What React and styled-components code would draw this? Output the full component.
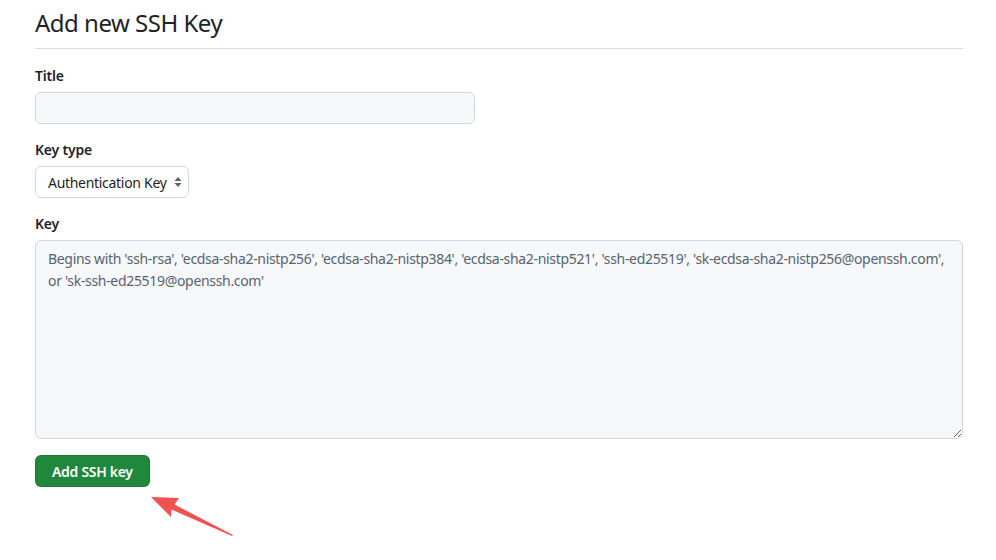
import * as React from 'react'
import styled, { createGlobalStyle } from 'styled-components'

const Global = createGlobalStyle`
  body {
    margin: 0;
    background: #ffffff;
    font-family: "Noto Sans", "Open Sans", sans-serif;
    color: #1f2328;
  }
`

const Page = styled.div`
  position: relative;
  padding: 5px 33px 0 35px;
  height: 555px;
`

const Heading = styled.h2`
  margin: 0;
  padding-bottom: 7px;
  font-size: 24px;
  font-weight: 400;
  line-height: 36px;
  letter-spacing: -0.5px;
  border-bottom: 1px solid #d8dee4;
`

const Form = styled.form`
  display: flex;
  flex-direction: column;
  gap: 16px;
  padding-top: 17px;
`

const Group = styled.div`
  display: flex;
  flex-direction: column;
  align-items: flex-start;
  gap: 6px;
`

const Label = styled.label`
  font-size: 14px;
  font-weight: 600;
  line-height: 20px;
  letter-spacing: -0.2px;
`

const Input = styled.input`
  box-sizing: border-box;
  width: 440px;
  height: 32px;
  border: 1px solid #d1d9e0;
  border-radius: 6px;
  background: #f6f8fa;
  font: inherit;
  font-size: 14px;
  padding: 0 12px;
  outline: none;
`

const SelectBox = styled.div`
  box-sizing: border-box;
  display: flex;
  align-items: center;
  gap: 7px;
  height: 32px;
  padding: 0 6px 0 12px;
  border: 1px solid #d1d9e0;
  border-radius: 6px;
  background: #ffffff;
  font-size: 14px;
  letter-spacing: -0.3px;
  color: #1f2328;
`

const TextArea = styled.textarea`
  box-sizing: border-box;
  width: 100%;
  height: 199px;
  border: 1px solid #d1d9e0;
  border-radius: 6px;
  background: #f6f8fa;
  font: inherit;
  font-size: 14px;
  line-height: 22px;
  letter-spacing: -0.32px;
  padding: 7px 12px;
  outline: none;
  resize: vertical;
  &::placeholder {
    color: #59636e;
  }
`

const Button = styled.button`
  align-self: flex-start;
  box-sizing: border-box;
  height: 32px;
  padding: 0 16px;
  border: 1px solid rgba(31, 35, 40, 0.15);
  border-radius: 6px;
  background: #1f883d;
  color: #ffffff;
  font: inherit;
  font-size: 14px;
  font-weight: 600;
  letter-spacing: -0.3px;
`

const Arrow = styled.svg`
  position: absolute;
  left: 148px;
  top: 488px;
`

const Caret = () => (
  <svg width="8" height="12" viewBox="0 0 8 12">
    <path d="M4 1 L7.5 5 H0.5 Z" fill="#59636e" />
    <path d="M4 11 L0.5 7 H7.5 Z" fill="#59636e" />
  </svg>
)

export default function App() {
  return (
    <Page>
      <Global />
      <Heading>Add new SSH Key</Heading>
      <Form>
        <Group>
          <Label>Title</Label>
          <Input />
        </Group>
        <Group>
          <Label>Key type</Label>
          <SelectBox>
            Authentication Key
            <Caret />
          </SelectBox>
        </Group>
        <Group>
          <Label>Key</Label>
          <TextArea placeholder="Begins with 'ssh-rsa', 'ecdsa-sha2-nistp256', 'ecdsa-sha2-nistp384', 'ecdsa-sha2-nistp521', 'ssh-ed25519', 'sk-ecdsa-sha2-nistp256@openssh.com', or 'sk-ssh-ed25519@openssh.com'" />
        </Group>
        <Button type="button">Add SSH key</Button>
      </Form>
      <Arrow width="90" height="52" viewBox="0 0 90 52">
        <path d="M3 9 L31 10 L26.5 16.5 L85 47 L84 48 L23.5 21.5 L23 29 Z" fill="#f0524f" />
      </Arrow>
    </Page>
  )
}
